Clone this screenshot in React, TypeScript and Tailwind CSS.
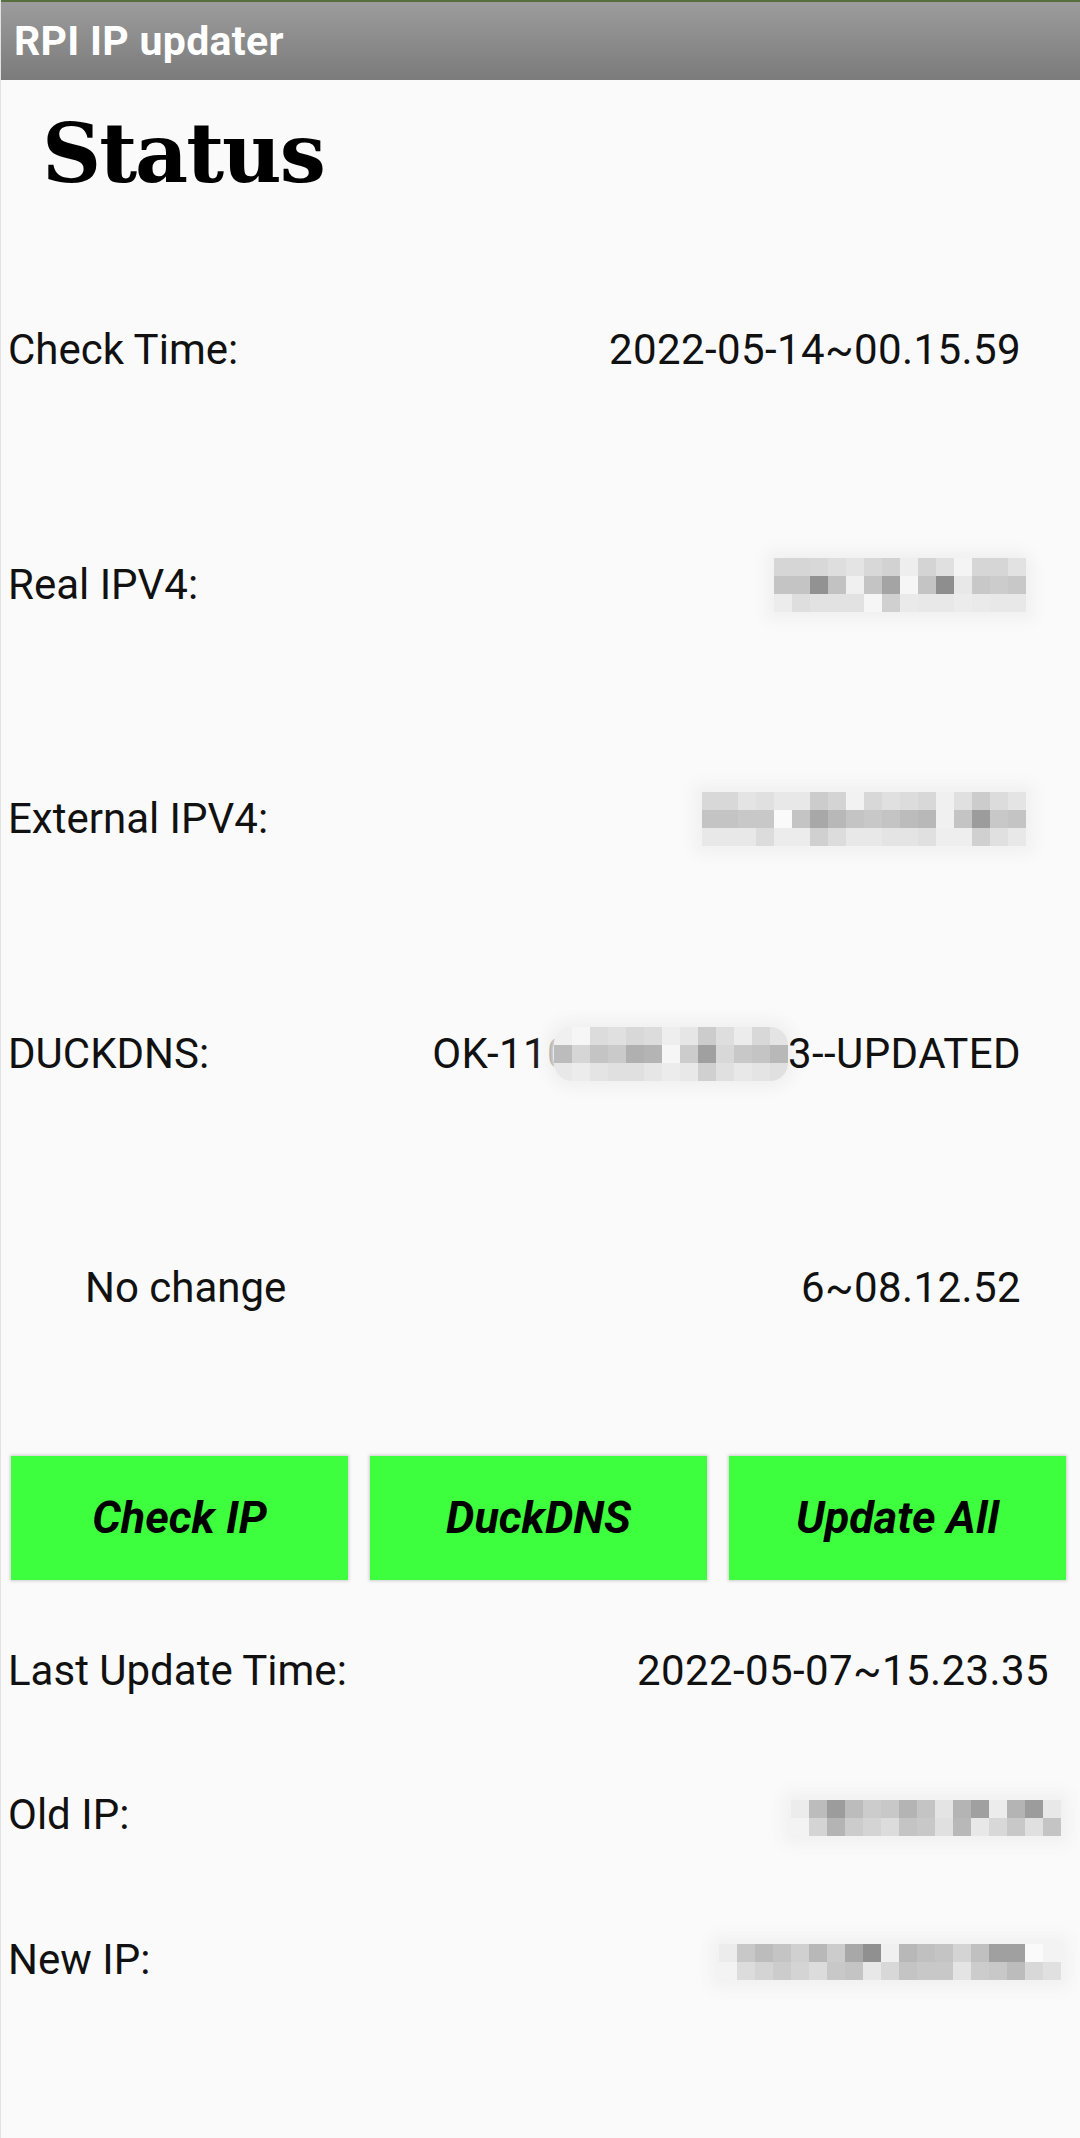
import React from "react";

type MRow = { offset: number; colors: string[] };

function Mosaic({ rows, cell = 18, className = "" }: { rows: MRow[]; cell?: number; className?: string }) {
  return (
    <div className={"flex flex-col shadow-[0_0_14px_8px_#f1f1f1] bg-[#f3f3f3] " + className}>
      {rows.map((r, i) => (
        <div key={i} className="flex" style={{ paddingLeft: r.offset * cell }}>
          {r.colors.map((c, j) => (
            <div key={j} style={{ width: cell, height: cell, backgroundColor: c }} />
          ))}
        </div>
      ))}
    </div>
  );
}

const realIp: MRow[] = [
  { offset: 0, colors: ["#d6d6d6", "#d6d6d6", "#d8d8d8", "#dedede", "#e4e4e4", "#d8d8d8", "#d2d2d2", "#eeeeee", "#d4d4d4", "#e0e0e0", "#f4f4f4", "#d6d6d6", "#d6d6d6", "#e2e2e2"] },
  { offset: 0, colors: ["#c4c4c4", "#c4c4c4", "#929292", "#c2c2c2", "#f0f0f0", "#c4c4c4", "#a4a4a4", "#f6f6f6", "#c4c4c4", "#8e8e8e", "#e8e8e8", "#c8c8c8", "#cccccc", "#c8c8c8"] },
  { offset: 0, colors: ["#ececec", "#dedede", "#e2e2e2", "#e2e2e2", "#e2e2e2", "#f6f6f6", "#d0d0d0", "#eaeaea", "#e8e8e8", "#e8e8e8", "#ececec", "#eaeaea", "#e8e8e8", "#e8e8e8"] },
];

const extIp: MRow[] = [
  { offset: 0, colors: ["#d8d8d8", "#d8d8d8", "#e4e4e4", "#e0e0e0", "#e8e8e8", "#e8e8e8", "#cccccc", "#d4d4d4", "#f2f2f2", "#d8d8d8", "#e0e0e0", "#dcdcdc", "#d8d8d8", "#f0f0f0", "#e0e0e0", "#cccccc", "#dcdcdc", "#e4e4e4"] },
  { offset: 0, colors: ["#c4c4c4", "#c4c4c4", "#c8c8c8", "#c8c8c8", "#fafafa", "#c4c4c4", "#a8a8a8", "#b8b8b8", "#c4c4c4", "#c8c8c8", "#c4c4c4", "#bcbcbc", "#b8b8b8", "#f0f0f0", "#c4c4c4", "#9c9c9c", "#c8c8c8", "#c4c4c4"] },
  { offset: 0, colors: ["#e8e8e8", "#e8e8e8", "#e8e8e8", "#dcdcdc", "#ececec", "#ececec", "#d0d0d0", "#dcdcdc", "#e8e8e8", "#e8e8e8", "#e4e4e4", "#e4e4e4", "#e0e0e0", "#eeeeee", "#eeeeee", "#d0d0d0", "#e0e0e0", "#e8e8e8"] },
];

const duck: MRow[] = [
  { offset: 0, colors: ["#f0f0f0", "#f6f6f6", "#dcdcdc", "#e0e0e0", "#d8d8d8", "#dcdcdc", "#eeeeee", "#e6e6e6", "#cccccc", "#dedede", "#ececec", "#d8d8d8", "#e4e4e4"] },
  { offset: 0, colors: ["#bcbcbc", "#d6d6d6", "#c4c4c4", "#cacaca", "#b0b0b0", "#b4b4b4", "#f6f6f6", "#cccccc", "#a0a0a0", "#d8d8d8", "#c8c8c8", "#c4c4c4", "#b8b8b8"] },
  { offset: 0, colors: ["#e8e8e8", "#ececec", "#e4e4e4", "#e0e0e0", "#e0e0e0", "#e6e6e6", "#ececec", "#e8e8e8", "#d0d0d0", "#e0e0e0", "#e8e8e8", "#e4e4e4", "#e0e0e0"] },
];

const oldIp: MRow[] = [
  { offset: 0, colors: ["#ececec", "#bcbcbc", "#9c9c9c", "#bcbcbc", "#cccccc", "#c8c8c8", "#b4b4b4", "#c4c4c4", "#e4e4e4", "#b4b4b4", "#a0a0a0", "#ececec", "#b4b4b4", "#9c9c9c", "#e8e8e8"] },
  { offset: 1, colors: ["#d4d4d4", "#b4b4b4", "#cccccc", "#d4d4d4", "#dcdcdc", "#c4c4c4", "#c8c8c8", "#e0e0e0", "#b8b8b8", "#e8e8e8", "#d8d8d8", "#c8c8c8", "#e0e0e0", "#c4c4c4"] },
];

const newIp: MRow[] = [
  { offset: 0, colors: ["#ececec", "#c8c8c8", "#bcbcbc", "#c4c4c4", "#d0d0d0", "#b8b8b8", "#cccccc", "#a8a8a8", "#909090", "#f0f0f0", "#b8b8b8", "#c0c0c0", "#c4c4c4", "#d4d4d4", "#c0c0c0", "#a0a0a0", "#a0a0a0", "#fafafa"] },
  { offset: 1, colors: ["#dcdcdc", "#d4d4d4", "#cccccc", "#d4d4d4", "#dcdcdc", "#c8c8c8", "#c4c4c4", "#e8e8e8", "#d8d8d8", "#c4c4c4", "#c8c8c8", "#c8c8c8", "#e4e4e4", "#cccccc", "#c8c8c8", "#bcbcbc", "#d8d8d8", "#e0e0e0"] },
];

function Row({ label, children, h, labelClass = "pl-[7px]", valueClass = "pr-[59px]" }: { label: string; children: React.ReactNode; h: string; labelClass?: string; valueClass?: string }) {
  return (
    <div className={"flex items-center justify-between " + h}>
      <div className={labelClass}>{label}</div>
      <div className={"flex items-center tracking-[0.4px] " + valueClass}>{children}</div>
    </div>
  );
}

export default function App() {
  return (
    <div className="w-[1080px] min-h-[2138px] bg-[#fafafa] border-l border-[#e2e2e2] text-[#111] font-['Roboto',sans-serif] text-[42px] leading-none">
      <div className="h-[80px] border-t-2 border-[#566f3c] bg-gradient-to-b from-[#9c9c9c] to-[#7b7b7b] flex items-center pl-[13px]">
        <span className="text-white font-bold text-[41px] tracking-[0.3px]">RPI IP updater</span>
      </div>
      <div className="pt-[32px] pl-[41px] h-[153px]">
        <div className="font-['DejaVu_Serif',serif] font-bold text-[82px] leading-none tracking-[-2px] text-black">Status</div>
      </div>
      <div className="flex flex-col">
        <Row label="Check Time:" h="h-[234.5px]">2022-05-14~00.15.59</Row>
        <Row label="Real IPV4:" h="h-[234.5px]" valueClass="pr-[54px]">
          <Mosaic rows={realIp} className="rounded-tr-[10px]" />
        </Row>
        <Row label="External IPV4:" h="h-[234.5px]" valueClass="pr-[54px]">
          <Mosaic rows={extIp} />
        </Row>
        <Row label="DUCKDNS:" h="h-[234.5px]">
          <span>OK-110</span>
          <Mosaic rows={duck} className="ml-[-17px] rounded-[18px] overflow-hidden" />
          <span>3--UPDATED</span>
        </Row>
        <Row label="No change" h="h-[234.5px]" labelClass="pl-[84px]">6~08.12.52</Row>
      </div>
      <div className="flex gap-[22px] pl-[10px] pr-[14px] mt-[50px]">
        {["Check IP", "DuckDNS", "Update All"].map((t) => (
          <button
            key={t}
            className="flex-1 h-[124px] bg-[#3dff3d] shadow-[0_0_3px_1px_rgba(0,0,0,0.18)] flex items-center justify-center font-bold italic text-[45px] text-black"
          >
            {t}
          </button>
        ))}
      </div>
      <div className="flex flex-col mt-[19px]">
        <Row label="Last Update Time:" h="h-[144.5px]" valueClass="pr-[31px]">2022-05-07~15.23.35</Row>
        <Row label="Old IP:" h="h-[144.5px]" valueClass="pr-[19px] pt-[6px]">
          <Mosaic rows={oldIp} />
        </Row>
        <Row label="New IP:" h="h-[144.5px]" valueClass="pr-[19px] pt-[4px]">
          <Mosaic rows={newIp} />
        </Row>
      </div>
    </div>
  );
}
